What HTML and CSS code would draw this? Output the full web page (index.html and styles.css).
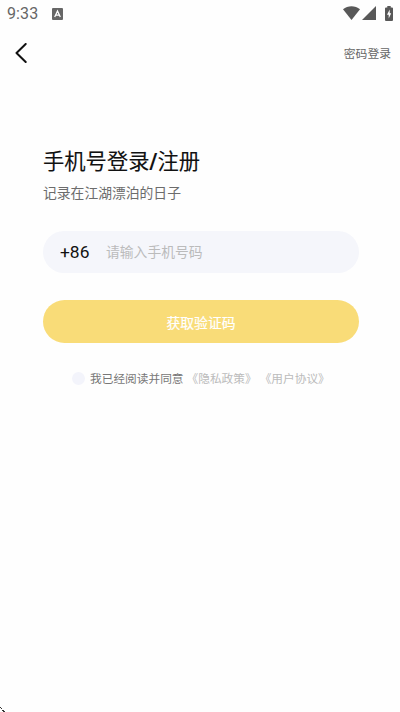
FILE: index.html
```html
<!DOCTYPE html>
<html lang="zh-CN">
<head>
<meta charset="utf-8">
<title>手机号登录</title>
<link rel="stylesheet" href="styles.css">
</head>
<body>
<div class="screen">
  <div class="status">
    <span class="time">9:33</span>
    <svg class="app" width="11" height="12" viewBox="0 0 11 12"><rect width="11" height="12" rx="1" fill="#666"/><path d="M2.7 9 5.5 3 8.3 9M3.8 7.2h3.4" fill="none" stroke="#fff" stroke-width="1.3"/></svg>
    <div class="signals">
      <svg width="17" height="14" viewBox="0 0 17 14"><path d="M0 3.2C4.8-.8 12.2-.8 17 3.2L8.5 14Z" fill="#585858"/></svg>
      <svg width="14" height="14" viewBox="0 0 14 14"><path d="M14 0V14H0Z" fill="#585858"/></svg>
      <svg class="battery" width="8" height="15" viewBox="0 0 8 15"><path d="M2.3 0h3.4v1.5H7q1 0 1 1V14q0 1-1 1H1q-1 0-1-1V2.500q0-1 1-1h1.300Z" fill="#585858"/><path d="M4.700 3.500 2 8.700h1.700V12.500L6.200 7.300H4.700Z" fill="#fff"/></svg>
    </div>
  </div>
  <header class="nav">
    <svg width="12" height="20" viewBox="0 0 12 20"><path d="M10.700 1 1.500 10l9.200 9" fill="none" stroke="#111" stroke-width="2" stroke-linecap="round" stroke-linejoin="round"/></svg>
    <span class="alt">密码登录</span>
  </header>
  <main class="form">
    <h1>手机号登录<span class="slash">/</span>注册</h1>
    <p class="sub">记录在江湖漂泊的日子</p>
    <div class="phone"><span class="code">+86</span><span class="hint">请输入手机号码</span></div>
    <div class="submit">获取验证码</div>
    <div class="agree"><i class="radio"></i><span class="read">我已经阅读并同意</span><span class="link">《隐私政策》</span><span class="link second">《用户协议》</span></div>
  </main>
  <svg class="corner" width="6" height="6" viewBox="0 0 6 6"><path d="M0 1h1v1h1v1H1V2H0ZM2 4h2v1h1v1H3V5H2Z" fill="#333"/></svg>
</div>
</body>
</html>
```
FILE: styles.css
```css
* { box-sizing: border-box; }
body { margin: 0; background: #fefefe; font-family: Roboto, "Noto Sans CJK SC", sans-serif; }
.screen { position: relative; width: 400px; height: 712px; overflow: hidden; }
svg { display: block; flex: none; }
.status { display: flex; align-items: center; height: 28px; padding: 0 7px; }
.time { width: 45px; font-size: 16px; line-height: 28px; color: #666; letter-spacing: .1px; }
.signals { display: flex; align-items: center; gap: 2px; margin-left: auto; margin-top: -2px; }
.battery { margin-left: 7px; }
.nav { display: flex; align-items: center; justify-content: space-between; height: 50px; padding: 0 9px 0 15px; }
.alt { padding-bottom: 2px; font-size: 11.8px; color: #666; }
.form { padding: 68px 41px 0 43px; }
h1 { margin: 0; font-size: 21.3px; line-height: 31px; font-weight: 400; color: #111; white-space: nowrap; -webkit-text-stroke: .1px #111; }
.slash { font-weight: 700; }
.sub { margin: 5px 0 0; font-size: 13.8px; line-height: 22px; color: #6c6c6c; }
.phone { display: flex; align-items: center; height: 42px; margin-top: 27px; padding-left: 17px; border-radius: 21px; background: #f5f6fb; }
.code { width: 46px; font-size: 17.4px; color: #111; }
.hint { padding-bottom: 2px; font-size: 13.8px; color: #bbb; }
.submit { height: 43px; margin-top: 27px; border-radius: 22px; background: #f9dc78; color: #fff; font-size: 13.8px; font-weight: 400; line-height: 46px; text-align: center; -webkit-text-stroke: .2px #fff; }
.agree { display: flex; align-items: center; height: 20px; margin-top: 25px; padding-left: 29px; font-size: 11.7px; white-space: nowrap; }
.radio { width: 13px; height: 13px; margin-right: 5px; border-radius: 50%; background: #f3f4fb; }
.read, .link { padding-bottom: 2px; }
.read { margin-right: 3px; color: #777; }
.link { color: #bbb; }
.second { margin-left: 3px; }
.corner { position: absolute; left: 0; bottom: 0; }
```
